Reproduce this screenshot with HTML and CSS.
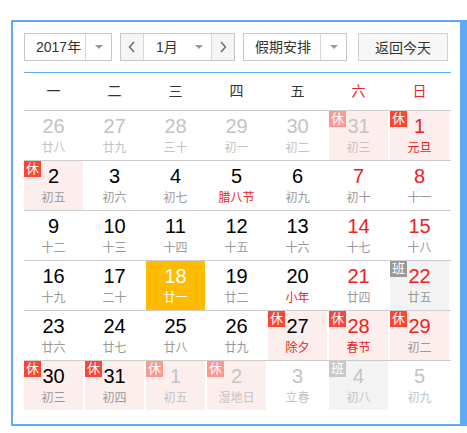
FILE: index.html
```html
<!DOCTYPE html>
<html lang="zh-CN">

<head>
    <meta charset="UTF-8">
    <meta name="viewport" content="width=device-width, initial-scale=1.0">
    <title>万年历</title>
    <link rel="stylesheet" href="styles.css">
</head>

<body>
    <div class="cal">
        <div class="cal-head">
            <div class="sel sel-year">
                <span class="sel-text">2017年</span>
                <span class="sel-arrow"><i class="tri"></i></span>
            </div>
            <div class="sel sel-month">
                <span class="nav-btn">
                    <svg width="8" height="12" viewBox="0 0 8 12"><polyline points="6,1 1.5,6 6,11" fill="none" stroke="#666" stroke-width="1.4"/></svg>
                </span>
                <span class="sel-text month-text">1月<i class="tri"></i></span>
                <span class="nav-btn">
                    <svg width="8" height="12" viewBox="0 0 8 12"><polyline points="2,1 6.5,6 2,11" fill="none" stroke="#666" stroke-width="1.4"/></svg>
                </span>
            </div>
            <div class="sel sel-holiday">
                <span class="sel-text">假期安排</span>
                <span class="sel-arrow"><i class="tri"></i></span>
            </div>
            <button class="today-btn" type="button">返回今天</button>
        </div>

        <div class="week">
            <span>一</span><span>二</span><span>三</span><span>四</span><span>五</span>
            <span class="red">六</span><span class="red">日</span>
        </div>

        <div class="row">
            <div class="day old"><b>26</b><em>廿八</em></div>
            <div class="day old"><b>27</b><em>廿九</em></div>
            <div class="day old"><b>28</b><em>三十</em></div>
            <div class="day old"><b>29</b><em>初一</em></div>
            <div class="day old"><b>30</b><em>初二</em></div>
            <div class="day old rest"><i class="tag">休</i><b>31</b><em>初三</em></div>
            <div class="day rest wk"><i class="tag">休</i><b>1</b><em class="fest">元旦</em></div>
        </div>
        <div class="row">
            <div class="day rest"><i class="tag">休</i><b>2</b><em>初五</em></div>
            <div class="day"><b>3</b><em>初六</em></div>
            <div class="day"><b>4</b><em>初七</em></div>
            <div class="day"><b>5</b><em class="fest">腊八节</em></div>
            <div class="day"><b>6</b><em>初九</em></div>
            <div class="day wk"><b>7</b><em>初十</em></div>
            <div class="day wk"><b>8</b><em>十一</em></div>
        </div>
        <div class="row">
            <div class="day"><b>9</b><em>十二</em></div>
            <div class="day"><b>10</b><em>十三</em></div>
            <div class="day"><b>11</b><em>十四</em></div>
            <div class="day"><b>12</b><em>十五</em></div>
            <div class="day"><b>13</b><em>十六</em></div>
            <div class="day wk"><b>14</b><em>十七</em></div>
            <div class="day wk"><b>15</b><em>十八</em></div>
        </div>
        <div class="row">
            <div class="day"><b>16</b><em>十九</em></div>
            <div class="day"><b>17</b><em>二十</em></div>
            <div class="day today"><b>18</b><em>廿一</em></div>
            <div class="day"><b>19</b><em>廿二</em></div>
            <div class="day"><b>20</b><em class="fest">小年</em></div>
            <div class="day wk"><b>21</b><em>廿四</em></div>
            <div class="day wk work"><i class="tag">班</i><b>22</b><em>廿五</em></div>
        </div>
        <div class="row">
            <div class="day"><b>23</b><em>廿六</em></div>
            <div class="day"><b>24</b><em>廿七</em></div>
            <div class="day"><b>25</b><em>廿八</em></div>
            <div class="day"><b>26</b><em>廿九</em></div>
            <div class="day rest"><i class="tag">休</i><b>27</b><em class="fest">除夕</em></div>
            <div class="day rest wk"><i class="tag">休</i><b>28</b><em class="fest">春节</em></div>
            <div class="day rest wk"><i class="tag">休</i><b>29</b><em>初二</em></div>
        </div>
        <div class="row">
            <div class="day rest"><i class="tag">休</i><b>30</b><em>初三</em></div>
            <div class="day rest"><i class="tag">休</i><b>31</b><em>初四</em></div>
            <div class="day old rest"><i class="tag">休</i><b>1</b><em>初五</em></div>
            <div class="day old rest"><i class="tag">休</i><b>2</b><em>湿地日</em></div>
            <div class="day old"><b>3</b><em>立春</em></div>
            <div class="day old work"><i class="tag">班</i><b>4</b><em>初八</em></div>
            <div class="day old"><b>5</b><em>初九</em></div>
        </div>
    </div>
</body>

</html>
```

FILE: styles.css
```css
* {
    padding: 0;
    margin: 0;
    box-sizing: border-box;
}

html,
body {
    width: 100%;
    height: 100%;
    background-color: #fff;
    font-family: "Liberation Sans", "Noto Sans CJK SC", sans-serif;
    overflow: hidden;
}

.cal {
    width: 456px;
    margin: 20px 0 0 11px;
    padding: 11px 9px 14px 11px;
    border: 2px solid #5eaaf6;
    border-right-width: 7px;
    background-color: #fff;
}

/* header bar */
.cal-head {
    display: flex;
    align-items: center;
    height: 28px;
    margin-bottom: 11px;
}

.sel {
    display: flex;
    height: 28px;
    border: 1px solid #c8c8c8;
    font-size: 14px;
    line-height: 26px;
    color: #333;
}

.sel-text {
    padding-left: 11px;
}

.sel-arrow {
    display: flex;
    align-items: center;
    justify-content: center;
    width: 26px;
    border-left: 1px solid #d6d6d6;
}

.tri {
    display: inline-block;
    width: 0;
    height: 0;
    border-left: 4px solid transparent;
    border-right: 4px solid transparent;
    border-top: 4px solid #999;
}

.sel-year {
    width: 88px;
}

.sel-year .sel-text {
    width: 61px;
}

.sel-month {
    width: 115px;
    margin-left: 8px;
}

.nav-btn {
    display: flex;
    align-items: center;
    justify-content: center;
    width: 23px;
    background-color: #f5f5f5;
}

.nav-btn:first-child {
    border-right: 1px solid #d6d6d6;
}

.nav-btn:last-child {
    border-left: 1px solid #d6d6d6;
}

.month-text {
    display: flex;
    align-items: center;
    justify-content: space-between;
    width: 67px;
    padding: 0 8px 0 12px;
}

.sel-holiday {
    width: 104px;
    margin-left: 8px;
}

.sel-holiday .sel-text {
    width: 77px;
}

.today-btn {
    width: 90px;
    height: 28px;
    margin-left: 11px;
    border: 1px solid #d0d0d0;
    background-color: #f7f7f7;
    font-family: inherit;
    font-size: 14px;
    color: #333;
    cursor: pointer;
}

/* weekday header */
.week {
    display: grid;
    grid-template-columns: repeat(7, 61px);
    height: 38px;
    border-top: 1px solid #5eaaf6;
    font-size: 14px;
    line-height: 37px;
    color: #333;
}

.week span {
    padding-right: 2px;
    text-align: center;
}

.week .red {
    color: #e22;
}

/* day grid */
.row {
    display: grid;
    grid-template-columns: repeat(7, 61px);
    border-top: 1px solid #ccc;
}

.day {
    position: relative;
    height: 49px;
    margin-right: 2px;
    padding-top: 3px;
    text-align: center;
}

.day b {
    display: block;
    font-weight: normal;
    font-size: 20px;
    line-height: 24px;
    color: #000;
}

.day em {
    display: block;
    margin-top: 2px;
    font-style: normal;
    font-size: 12px;
    line-height: 16px;
    color: #999;
}

.day.wk b,
.day em.fest {
    color: #e22;
}

.day.rest {
    background-color: #fdeeee;
}

.day.work {
    background-color: #f3f3f3;
}

.day.today {
    background-color: #ffbb00;
}

.day.today b,
.day.today em {
    color: #fff;
}

.tag {
    position: absolute;
    top: 0;
    left: 0;
    width: 17px;
    height: 16px;
    font-style: normal;
    font-size: 13px;
    line-height: 16px;
    color: #fff;
    background-color: #ff4436;
}

.work .tag {
    background-color: #999;
}

.day.old b,
.day.old em {
    color: #c3c3c3;
}

.day.old .tag {
    background-color: #fa9b93;
}

.day.old.work .tag {
    background-color: #c8c8c8;
}
```
